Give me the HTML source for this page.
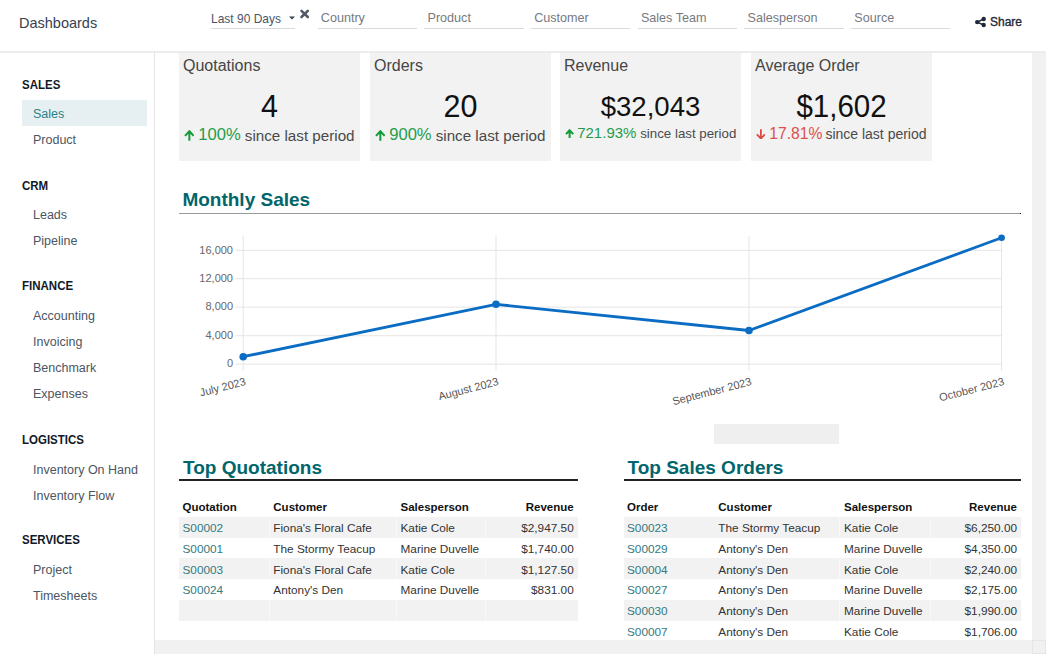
<!DOCTYPE html>
<html><head><meta charset="utf-8"><title>Dashboards</title>
<style>
html,body{margin:0;padding:0;background:#fff;}
body{width:1046px;height:654px;overflow:hidden;position:relative;font-family:"Liberation Sans",sans-serif;}
.t{position:absolute;white-space:nowrap;font-family:"Liberation Sans",sans-serif;}
.r{position:absolute;}
svg text{font-family:"Liberation Sans",sans-serif;}
</style></head><body>
<div class="t" style="left:19.00px;top:15.73px;font-size:14.5px;line-height:14.5px;color:#374151;font-weight:normal;">Dashboards</div>
<div class="t" style="left:211.00px;top:12.64px;font-size:12px;line-height:12px;color:#4b5563;font-weight:normal;transform:scaleY(1.1);transform-origin:0 84.6%">Last 90 Days</div>
<div class="r" style="left:211px;top:28px;width:84px;height:1px;background:#d9dadc;"></div>
<svg class="r" style="left:288px;top:15px" width="8" height="6"><path d="M1 1.5 L7 1.5 L4 4.5 Z" fill="#374151"/></svg>
<svg class="r" style="left:299px;top:9px" width="12" height="11"><path d="M2.5 1.9 L8.8 8.0 M8.8 1.9 L2.5 8.0" stroke="#545b66" stroke-width="2.6" stroke-linecap="round"/></svg>
<div class="r" style="left:318px;top:28px;width:99px;height:1px;background:#d9dadc;"></div>
<div class="t" style="left:320.80px;top:12.13px;font-size:12.6px;line-height:12.6px;color:#767a80;font-weight:normal;transform:scaleY(1.06);transform-origin:0 84.6%">Country</div>
<div class="r" style="left:424px;top:28px;width:100px;height:1px;background:#d9dadc;"></div>
<div class="t" style="left:427.50px;top:12.13px;font-size:12.6px;line-height:12.6px;color:#767a80;font-weight:normal;transform:scaleY(1.06);transform-origin:0 84.6%">Product</div>
<div class="r" style="left:531px;top:28px;width:99px;height:1px;background:#d9dadc;"></div>
<div class="t" style="left:534.20px;top:12.13px;font-size:12.6px;line-height:12.6px;color:#767a80;font-weight:normal;transform:scaleY(1.06);transform-origin:0 84.6%">Customer</div>
<div class="r" style="left:638px;top:28px;width:99px;height:1px;background:#d9dadc;"></div>
<div class="t" style="left:640.90px;top:12.13px;font-size:12.6px;line-height:12.6px;color:#767a80;font-weight:normal;transform:scaleY(1.06);transform-origin:0 84.6%">Sales Team</div>
<div class="r" style="left:744px;top:28px;width:100px;height:1px;background:#d9dadc;"></div>
<div class="t" style="left:747.60px;top:12.13px;font-size:12.6px;line-height:12.6px;color:#767a80;font-weight:normal;transform:scaleY(1.06);transform-origin:0 84.6%">Salesperson</div>
<div class="r" style="left:851px;top:28px;width:99px;height:1px;background:#d9dadc;"></div>
<div class="t" style="left:854.30px;top:12.13px;font-size:12.6px;line-height:12.6px;color:#767a80;font-weight:normal;transform:scaleY(1.06);transform-origin:0 84.6%">Source</div>
<svg class="r" style="left:974px;top:16px" width="13" height="12"><g fill="#1f2937"><circle cx="9.7" cy="3" r="2.2"/><circle cx="9.7" cy="9" r="2.2"/><circle cx="3.2" cy="6.1" r="2.2"/></g><path d="M3.2 6.1 L9.7 3 M3.2 6.1 L9.7 9" stroke="#1f2937" stroke-width="1.5"/></svg>
<div class="t" style="left:990.00px;top:16.44px;font-size:12px;line-height:12px;color:#1f2937;font-weight:normal;-webkit-text-stroke:0.35px #1f2937">Share</div>
<div class="r" style="left:0px;top:51px;width:1046px;height:2px;background:#ececec;"></div>
<div class="r" style="left:154px;top:53px;width:1px;height:601px;background:#e5e5e5;"></div>
<div class="r" style="left:22px;top:100px;width:125px;height:26px;background:#e6f0f2;"></div>
<div class="t" style="left:22.00px;top:79.67px;font-size:11.5px;line-height:11.5px;color:#111827;font-weight:bold;transform:scaleY(1.1);transform-origin:0 85%">SALES</div>
<div class="t" style="left:22.00px;top:180.67px;font-size:11.5px;line-height:11.5px;color:#111827;font-weight:bold;transform:scaleY(1.1);transform-origin:0 85%">CRM</div>
<div class="t" style="left:22.00px;top:280.87px;font-size:11.5px;line-height:11.5px;color:#111827;font-weight:bold;transform:scaleY(1.1);transform-origin:0 85%">FINANCE</div>
<div class="t" style="left:22.00px;top:435.07px;font-size:11.5px;line-height:11.5px;color:#111827;font-weight:bold;transform:scaleY(1.1);transform-origin:0 85%">LOGISTICS</div>
<div class="t" style="left:22.00px;top:535.27px;font-size:11.5px;line-height:11.5px;color:#111827;font-weight:bold;transform:scaleY(1.1);transform-origin:0 85%">SERVICES</div>
<div class="t" style="left:33.00px;top:107.92px;font-size:12.5px;line-height:12.5px;color:#2a8289;font-weight:normal;">Sales</div>
<div class="t" style="left:33.00px;top:134.02px;font-size:12.5px;line-height:12.5px;color:#4b5563;font-weight:normal;">Product</div>
<div class="t" style="left:33.00px;top:209.02px;font-size:12.5px;line-height:12.5px;color:#4b5563;font-weight:normal;">Leads</div>
<div class="t" style="left:33.00px;top:235.22px;font-size:12.5px;line-height:12.5px;color:#4b5563;font-weight:normal;">Pipeline</div>
<div class="t" style="left:33.00px;top:309.82px;font-size:12.5px;line-height:12.5px;color:#4b5563;font-weight:normal;">Accounting</div>
<div class="t" style="left:33.00px;top:335.92px;font-size:12.5px;line-height:12.5px;color:#4b5563;font-weight:normal;">Invoicing</div>
<div class="t" style="left:33.00px;top:362.02px;font-size:12.5px;line-height:12.5px;color:#4b5563;font-weight:normal;">Benchmark</div>
<div class="t" style="left:33.00px;top:388.22px;font-size:12.5px;line-height:12.5px;color:#4b5563;font-weight:normal;">Expenses</div>
<div class="t" style="left:33.00px;top:463.62px;font-size:12.5px;line-height:12.5px;color:#4b5563;font-weight:normal;">Inventory On Hand</div>
<div class="t" style="left:33.00px;top:489.62px;font-size:12.5px;line-height:12.5px;color:#4b5563;font-weight:normal;">Inventory Flow</div>
<div class="t" style="left:33.00px;top:563.62px;font-size:12.5px;line-height:12.5px;color:#4b5563;font-weight:normal;">Project</div>
<div class="t" style="left:33.00px;top:590.02px;font-size:12.5px;line-height:12.5px;color:#4b5563;font-weight:normal;">Timesheets</div>
<div class="r" style="left:179px;top:53px;width:181px;height:108px;background:#f2f2f2;"></div>
<div class="t" style="left:183.00px;top:57.66px;font-size:16px;line-height:16px;color:#454545;font-weight:normal;">Quotations</div>
<div class="t" style="left:-30.50px;width:600px;text-align:center;top:90.88px;font-size:30.5px;line-height:30.5px;color:#111111;font-weight:normal;transform:scaleY(1.04);transform-origin:50% 85%">4</div>
<svg class="r" style="left:183.8px;top:130px" width="10.7" height="11"><path d="M5.35 10.7 V1.2 M1.0 5.85 L5.35 1.2 L9.7 5.85" stroke="#129b38" stroke-width="2.0" fill="none" stroke-linejoin="miter"/></svg>
<div class="t" style="left:198.30px;top:127.35px;font-size:16.6px;line-height:16.6px;color:#1f9d4c;font-weight:normal;">100%</div>
<div class="t" style="left:244.80px;top:127.73px;font-size:15.2px;line-height:15.2px;color:#4a4a4a;font-weight:normal;">since last period</div>
<div class="r" style="left:370px;top:53px;width:181px;height:108px;background:#f2f2f2;"></div>
<div class="t" style="left:374.00px;top:57.66px;font-size:16px;line-height:16px;color:#454545;font-weight:normal;">Orders</div>
<div class="t" style="left:160.50px;width:600px;text-align:center;top:90.88px;font-size:30.5px;line-height:30.5px;color:#111111;font-weight:normal;transform:scaleY(1.04);transform-origin:50% 85%">20</div>
<svg class="r" style="left:374.6px;top:130px" width="10.7" height="11"><path d="M5.35 10.7 V1.2 M1.0 5.85 L5.35 1.2 L9.7 5.85" stroke="#129b38" stroke-width="2.0" fill="none" stroke-linejoin="miter"/></svg>
<div class="t" style="left:389.20px;top:127.35px;font-size:16.6px;line-height:16.6px;color:#1f9d4c;font-weight:normal;">900%</div>
<div class="t" style="left:435.70px;top:127.73px;font-size:15.2px;line-height:15.2px;color:#4a4a4a;font-weight:normal;">since last period</div>
<div class="r" style="left:560px;top:53px;width:181px;height:108px;background:#f2f2f2;"></div>
<div class="t" style="left:564.00px;top:57.66px;font-size:16px;line-height:16px;color:#454545;font-weight:normal;">Revenue</div>
<div class="t" style="left:350.50px;width:600px;text-align:center;top:93.34px;font-size:27.6px;line-height:27.6px;color:#111111;font-weight:normal;transform:scaleY(1.03);transform-origin:50% 85%">$32,043</div>
<svg class="r" style="left:565.3px;top:128.5px" width="9.2" height="9.4"><path d="M4.6 9.1 V1.2 M1.0 5.1 L4.6 1.2 L8.2 5.1" stroke="#129b38" stroke-width="2.0" fill="none" stroke-linejoin="miter"/></svg>
<div class="t" style="left:577.20px;top:124.70px;font-size:15px;line-height:15px;color:#1f9d4c;font-weight:normal;">721.93%</div>
<div class="t" style="left:640.20px;top:126.64px;font-size:13.3px;line-height:13.3px;color:#4a4a4a;font-weight:normal;">since last period</div>
<div class="r" style="left:751px;top:53px;width:181px;height:108px;background:#f2f2f2;"></div>
<div class="t" style="left:755.00px;top:57.66px;font-size:16px;line-height:16px;color:#454545;font-weight:normal;">Average Order</div>
<div class="t" style="left:541.50px;width:600px;text-align:center;top:91.73px;font-size:29.5px;line-height:29.5px;color:#111111;font-weight:normal;transform:scaleY(1.05);transform-origin:50% 85%">$1,602</div>
<svg class="r" style="left:755.5px;top:128.5px" width="9.8" height="10.7"><path d="M4.9 0.3 V9.5 M0.9 5.299999999999999 L4.9 9.6 L8.9 5.299999999999999" stroke="#dc4a46" stroke-width="1.8" fill="none" stroke-linejoin="miter"/></svg>
<div class="t" style="left:769.20px;top:126.31px;font-size:15.7px;line-height:15.7px;color:#dc4f4b;font-weight:normal;">17.81%</div>
<div class="t" style="left:825.40px;top:126.95px;font-size:14px;line-height:14px;color:#4a4a4a;font-weight:normal;">since last period</div>
<div class="t" style="left:182.40px;top:190.22px;font-size:19px;line-height:19px;color:#01666b;font-weight:bold;">Monthly Sales</div>
<div class="r" style="left:179px;top:213px;width:841px;height:1px;background:#9a9a9a;"></div>
<div class="r" style="left:1020px;top:213px;width:1px;height:1px;background:#111;"></div>
<svg class="r" style="left:0;top:0" width="1046" height="654">
<line x1="235.5" y1="364.1" x2="1002" y2="364.1" stroke="#e5e5e5" stroke-width="1"/>
<line x1="235.5" y1="335.7" x2="1002" y2="335.7" stroke="#e5e5e5" stroke-width="1"/>
<line x1="235.5" y1="307.1" x2="1002" y2="307.1" stroke="#e5e5e5" stroke-width="1"/>
<line x1="235.5" y1="278.7" x2="1002" y2="278.7" stroke="#e5e5e5" stroke-width="1"/>
<line x1="235.5" y1="250.3" x2="1002" y2="250.3" stroke="#e5e5e5" stroke-width="1"/>
<line x1="243.2" y1="236" x2="243.2" y2="370.5" stroke="#e5e5e5" stroke-width="1"/>
<line x1="496" y1="236" x2="496" y2="370.5" stroke="#e5e5e5" stroke-width="1"/>
<line x1="749" y1="236" x2="749" y2="370.5" stroke="#e5e5e5" stroke-width="1"/>
<line x1="1001.6" y1="236" x2="1001.6" y2="370.5" stroke="#e5e5e5" stroke-width="1"/>
<text x="233" y="367.40000000000003" text-anchor="end" font-family="Liberation Sans" font-size="11" fill="#666">0</text>
<text x="233" y="339.0" text-anchor="end" font-family="Liberation Sans" font-size="11" fill="#666">4,000</text>
<text x="233" y="310.40000000000003" text-anchor="end" font-family="Liberation Sans" font-size="11" fill="#666">8,000</text>
<text x="233" y="282.0" text-anchor="end" font-family="Liberation Sans" font-size="11" fill="#666">12,000</text>
<text x="233" y="253.60000000000002" text-anchor="end" font-family="Liberation Sans" font-size="11" fill="#666">16,000</text>
<polyline points="243.2,356.7 496,304.3 749,330.5 1001.6,237.8" fill="none" stroke="#0b6cc4" stroke-width="2.8" stroke-linejoin="round"/>
<circle cx="243.2" cy="356.7" r="3.8" fill="#0b6cc4"/>
<circle cx="496" cy="304.3" r="3.8" fill="#0b6cc4"/>
<circle cx="749" cy="330.5" r="3.8" fill="#0b6cc4"/>
<circle cx="1001.6" cy="237.8" r="3.3" fill="#0b6cc4"/>
<text transform="translate(245.7,382) rotate(-14.5)" text-anchor="end" dominant-baseline="middle" font-family="Liberation Sans" font-size="11" fill="#555">July 2023</text>
<text transform="translate(498.5,382) rotate(-14.5)" text-anchor="end" dominant-baseline="middle" font-family="Liberation Sans" font-size="11" fill="#555">August 2023</text>
<text transform="translate(751.5,382) rotate(-14.5)" text-anchor="end" dominant-baseline="middle" font-family="Liberation Sans" font-size="11" fill="#555">September 2023</text>
<text transform="translate(1004.1,382) rotate(-14.5)" text-anchor="end" dominant-baseline="middle" font-family="Liberation Sans" font-size="11" fill="#555">October 2023</text>
</svg>
<div class="r" style="left:714px;top:424px;width:125px;height:20px;background:#efefef;"></div>
<div class="t" style="left:183.00px;top:457.52px;font-size:19px;line-height:19px;color:#01666b;font-weight:bold;">Top Quotations</div>
<div class="r" style="left:179px;top:479px;width:399px;height:2px;background:#222;"></div>
<div class="r" style="left:179px;top:517px;width:399px;height:21px;background:#f2f2f2;"></div>
<div class="r" style="left:179px;top:558px;width:399px;height:21px;background:#f2f2f2;"></div>
<div class="r" style="left:179px;top:600px;width:399px;height:21px;background:#f2f2f2;"></div>
<div class="r" style="left:269px;top:517px;width:1px;height:21px;background:#f8f8f8;"></div>
<div class="r" style="left:269px;top:558px;width:1px;height:21px;background:#f8f8f8;"></div>
<div class="r" style="left:269px;top:600px;width:1px;height:21px;background:#f8f8f8;"></div>
<div class="r" style="left:396px;top:517px;width:1px;height:21px;background:#f8f8f8;"></div>
<div class="r" style="left:396px;top:558px;width:1px;height:21px;background:#f8f8f8;"></div>
<div class="r" style="left:396px;top:600px;width:1px;height:21px;background:#f8f8f8;"></div>
<div class="r" style="left:485px;top:517px;width:1px;height:21px;background:#f8f8f8;"></div>
<div class="r" style="left:485px;top:558px;width:1px;height:21px;background:#f8f8f8;"></div>
<div class="r" style="left:485px;top:600px;width:1px;height:21px;background:#f8f8f8;"></div>
<div class="t" style="left:182.50px;top:502.17px;font-size:11.5px;line-height:11.5px;color:#111;font-weight:bold;">Quotation</div>
<div class="t" style="left:273.30px;top:502.17px;font-size:11.5px;line-height:11.5px;color:#111;font-weight:bold;">Customer</div>
<div class="t" style="left:400.50px;top:502.17px;font-size:11.5px;line-height:11.5px;color:#111;font-weight:bold;">Salesperson</div>
<div class="t" style="right:472.30px;top:502.17px;font-size:11.5px;line-height:11.5px;color:#111;font-weight:bold;">Revenue</div>
<div class="t" style="left:182.50px;top:523.31px;font-size:11.8px;line-height:11.8px;color:#337a80;font-weight:normal;">S00002</div>
<div class="t" style="left:273.30px;top:523.31px;font-size:11.8px;line-height:11.8px;color:#333;font-weight:normal;">Fiona's Floral Cafe</div>
<div class="t" style="left:400.50px;top:523.31px;font-size:11.8px;line-height:11.8px;color:#333;font-weight:normal;">Katie Cole</div>
<div class="t" style="right:472.30px;top:523.31px;font-size:11.8px;line-height:11.8px;color:#333;font-weight:normal;">$2,947.50</div>
<div class="t" style="left:182.50px;top:544.03px;font-size:11.8px;line-height:11.8px;color:#337a80;font-weight:normal;">S00001</div>
<div class="t" style="left:273.30px;top:544.03px;font-size:11.8px;line-height:11.8px;color:#333;font-weight:normal;">The Stormy Teacup</div>
<div class="t" style="left:400.50px;top:544.03px;font-size:11.8px;line-height:11.8px;color:#333;font-weight:normal;">Marine Duvelle</div>
<div class="t" style="right:472.30px;top:544.03px;font-size:11.8px;line-height:11.8px;color:#333;font-weight:normal;">$1,740.00</div>
<div class="t" style="left:182.50px;top:564.75px;font-size:11.8px;line-height:11.8px;color:#337a80;font-weight:normal;">S00003</div>
<div class="t" style="left:273.30px;top:564.75px;font-size:11.8px;line-height:11.8px;color:#333;font-weight:normal;">Fiona's Floral Cafe</div>
<div class="t" style="left:400.50px;top:564.75px;font-size:11.8px;line-height:11.8px;color:#333;font-weight:normal;">Katie Cole</div>
<div class="t" style="right:472.30px;top:564.75px;font-size:11.8px;line-height:11.8px;color:#333;font-weight:normal;">$1,127.50</div>
<div class="t" style="left:182.50px;top:585.47px;font-size:11.8px;line-height:11.8px;color:#337a80;font-weight:normal;">S00024</div>
<div class="t" style="left:273.30px;top:585.47px;font-size:11.8px;line-height:11.8px;color:#333;font-weight:normal;">Antony's Den</div>
<div class="t" style="left:400.50px;top:585.47px;font-size:11.8px;line-height:11.8px;color:#333;font-weight:normal;">Marine Duvelle</div>
<div class="t" style="right:472.30px;top:585.47px;font-size:11.8px;line-height:11.8px;color:#333;font-weight:normal;">$831.00</div>
<div class="t" style="left:627.50px;top:457.52px;font-size:19px;line-height:19px;color:#01666b;font-weight:bold;">Top Sales Orders</div>
<div class="r" style="left:623.5px;top:479px;width:397.5px;height:2px;background:#222;"></div>
<div class="r" style="left:623.5px;top:517px;width:397.5px;height:21px;background:#f2f2f2;"></div>
<div class="r" style="left:623.5px;top:558px;width:397.5px;height:21px;background:#f2f2f2;"></div>
<div class="r" style="left:623.5px;top:600px;width:397.5px;height:21px;background:#f2f2f2;"></div>
<div class="r" style="left:839px;top:517px;width:1px;height:21px;background:#f8f8f8;"></div>
<div class="r" style="left:839px;top:558px;width:1px;height:21px;background:#f8f8f8;"></div>
<div class="r" style="left:839px;top:600px;width:1px;height:21px;background:#f8f8f8;"></div>
<div class="r" style="left:929.5px;top:517px;width:1.0px;height:21px;background:#f8f8f8;"></div>
<div class="r" style="left:929.5px;top:558px;width:1.0px;height:21px;background:#f8f8f8;"></div>
<div class="r" style="left:929.5px;top:600px;width:1.0px;height:21px;background:#f8f8f8;"></div>
<div class="t" style="left:627.00px;top:502.17px;font-size:11.5px;line-height:11.5px;color:#111;font-weight:bold;">Order</div>
<div class="t" style="left:718.30px;top:502.17px;font-size:11.5px;line-height:11.5px;color:#111;font-weight:bold;">Customer</div>
<div class="t" style="left:844.00px;top:502.17px;font-size:11.5px;line-height:11.5px;color:#111;font-weight:bold;">Salesperson</div>
<div class="t" style="right:29.00px;top:502.17px;font-size:11.5px;line-height:11.5px;color:#111;font-weight:bold;">Revenue</div>
<div class="t" style="left:627.00px;top:523.31px;font-size:11.8px;line-height:11.8px;color:#337a80;font-weight:normal;">S00023</div>
<div class="t" style="left:718.30px;top:523.31px;font-size:11.8px;line-height:11.8px;color:#333;font-weight:normal;">The Stormy Teacup</div>
<div class="t" style="left:844.00px;top:523.31px;font-size:11.8px;line-height:11.8px;color:#333;font-weight:normal;">Katie Cole</div>
<div class="t" style="right:29.00px;top:523.31px;font-size:11.8px;line-height:11.8px;color:#333;font-weight:normal;">$6,250.00</div>
<div class="t" style="left:627.00px;top:544.03px;font-size:11.8px;line-height:11.8px;color:#337a80;font-weight:normal;">S00029</div>
<div class="t" style="left:718.30px;top:544.03px;font-size:11.8px;line-height:11.8px;color:#333;font-weight:normal;">Antony's Den</div>
<div class="t" style="left:844.00px;top:544.03px;font-size:11.8px;line-height:11.8px;color:#333;font-weight:normal;">Marine Duvelle</div>
<div class="t" style="right:29.00px;top:544.03px;font-size:11.8px;line-height:11.8px;color:#333;font-weight:normal;">$4,350.00</div>
<div class="t" style="left:627.00px;top:564.75px;font-size:11.8px;line-height:11.8px;color:#337a80;font-weight:normal;">S00004</div>
<div class="t" style="left:718.30px;top:564.75px;font-size:11.8px;line-height:11.8px;color:#333;font-weight:normal;">Antony's Den</div>
<div class="t" style="left:844.00px;top:564.75px;font-size:11.8px;line-height:11.8px;color:#333;font-weight:normal;">Katie Cole</div>
<div class="t" style="right:29.00px;top:564.75px;font-size:11.8px;line-height:11.8px;color:#333;font-weight:normal;">$2,240.00</div>
<div class="t" style="left:627.00px;top:585.47px;font-size:11.8px;line-height:11.8px;color:#337a80;font-weight:normal;">S00027</div>
<div class="t" style="left:718.30px;top:585.47px;font-size:11.8px;line-height:11.8px;color:#333;font-weight:normal;">Antony's Den</div>
<div class="t" style="left:844.00px;top:585.47px;font-size:11.8px;line-height:11.8px;color:#333;font-weight:normal;">Marine Duvelle</div>
<div class="t" style="right:29.00px;top:585.47px;font-size:11.8px;line-height:11.8px;color:#333;font-weight:normal;">$2,175.00</div>
<div class="t" style="left:627.00px;top:606.19px;font-size:11.8px;line-height:11.8px;color:#337a80;font-weight:normal;">S00030</div>
<div class="t" style="left:718.30px;top:606.19px;font-size:11.8px;line-height:11.8px;color:#333;font-weight:normal;">Antony's Den</div>
<div class="t" style="left:844.00px;top:606.19px;font-size:11.8px;line-height:11.8px;color:#333;font-weight:normal;">Marine Duvelle</div>
<div class="t" style="right:29.00px;top:606.19px;font-size:11.8px;line-height:11.8px;color:#333;font-weight:normal;">$1,990.00</div>
<div class="t" style="left:627.00px;top:626.91px;font-size:11.8px;line-height:11.8px;color:#337a80;font-weight:normal;">S00007</div>
<div class="t" style="left:718.30px;top:626.91px;font-size:11.8px;line-height:11.8px;color:#333;font-weight:normal;">Antony's Den</div>
<div class="t" style="left:844.00px;top:626.91px;font-size:11.8px;line-height:11.8px;color:#333;font-weight:normal;">Katie Cole</div>
<div class="t" style="right:29.00px;top:626.91px;font-size:11.8px;line-height:11.8px;color:#333;font-weight:normal;">$1,706.00</div>
<div class="r" style="left:1032px;top:53px;width:14px;height:587px;background:#f1f1f1;"></div>
<div class="r" style="left:155px;top:640px;width:877px;height:14px;background:#f1f1f1;"></div>
<div class="r" style="left:1032px;top:640px;width:14px;height:14px;background:#f1f1f1;box-sizing:border-box;border:1px solid #e6e6e6"></div>
</body></html>
